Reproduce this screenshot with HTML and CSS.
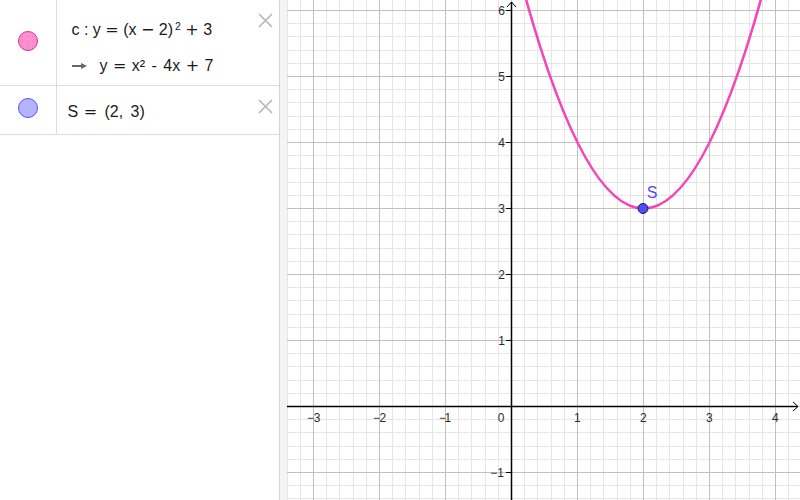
FILE: index.html
```html
<!DOCTYPE html>
<html lang="en">
<head>
<meta charset="utf-8">
<title>GeoGebra – Parabola</title>
<link rel="stylesheet" href="styles.css">
</head>
<body>
<div class="app">
  <div class="algebra">
    <div class="item item-c">
      <div class="marble-col"><span class="marble marble-pink marble-c"></span></div>
      <div class="content content-c">
        <div class="line line-def">c : y <span class="op">=</span> (x <span class="op">−</span> 2)<span class="sup">2</span> <span class="op">+</span> 3</div>
        <div class="line line-out"><svg class="out-arrow" width="15" height="10" viewBox="0 0 15 10"><path d="M0 5H10" stroke="#666" stroke-width="2"/><path d="M9 2L15 5L9 8Z" fill="#666"/></svg>y <span class="op">=</span> x² <span class="hy">-</span> 4x <span class="op">+</span> 7</div>
      </div>
      <div class="close"><svg width="15" height="15" viewBox="0 0 15 15"><path d="M1 1L14 14M14 1L1 14" stroke="#b3b3b3" stroke-width="1.5"/></svg></div>
    </div>
    <div class="item item-s">
      <div class="marble-col"><span class="marble marble-blue marble-s"></span></div>
      <div class="content content-s">
        <div class="line">S <span class="op">=</span> <span class="paren">(</span>2<span class="comma">,</span> 3)</div>
      </div>
      <div class="close"><svg width="15" height="15" viewBox="0 0 15 15"><path d="M1 1L14 14M14 1L1 14" stroke="#b3b3b3" stroke-width="1.5"/></svg></div>
    </div>
  </div>
  <div class="splitter"></div>
  <div class="graphics">
    <svg viewBox="287 0 513 500" width="513" height="500">
      <defs>
        <pattern id="grid" x="511" y="406" width="66" height="66" patternUnits="userSpaceOnUse">
          <rect width="66" height="66" fill="#fff"/>
          <path d="M13.7 0V66M26.9 0V66M40.1 0V66M53.3 0V66M0 13.7H66M0 26.9H66M0 40.1H66M0 53.3H66" stroke="#e6e6e6" stroke-width="1" shape-rendering="crispEdges"/>
          <path d="M0.5 0V66M0 0.5H66" stroke="#c0c0c0" stroke-width="1" shape-rendering="crispEdges"/>
        </pattern>
      </defs>
      <rect x="287" y="0" width="513" height="500" fill="url(#grid)"/>
      <g class="axes" stroke="#000" fill="none">
        <path d="M287 406.5H797.5M511.5 500V2" stroke-width="1.5"/>
        <path d="M793 402L798 406.5L793 411M507 7L511.5 2L516 7" stroke-width="1"/>
        <path d="M506 10.5H511.5M506 76.5H511.5M506 142.5H511.5M506 208.5H511.5M506 274.5H511.5M506 340.5H511.5M506 472.5H511.5" stroke-width="1"/>
      </g>
      <g class="labels">
        <text x="314" y="422" text-anchor="end">−</text><text x="313.8" y="422">3</text>
        <text x="380" y="422" text-anchor="end">−</text><text x="379.6" y="422">2</text>
        <text x="446" y="422" text-anchor="end">−</text><text x="444.6" y="422">1</text>
        <text x="504.5" y="422" text-anchor="end">0</text>
        <text x="577.3" y="422" text-anchor="middle">1</text>
        <text x="643.3" y="422" text-anchor="middle">2</text>
        <text x="709.3" y="422" text-anchor="middle">3</text>
        <text x="775.3" y="422" text-anchor="middle">4</text>
        <text x="505" y="15" text-anchor="end">6</text>
        <text x="505" y="81" text-anchor="end">5</text>
        <text x="505" y="147" text-anchor="end">4</text>
        <text x="505" y="213" text-anchor="end">3</text>
        <text x="505" y="279" text-anchor="end">2</text>
        <text x="505" y="345" text-anchor="end">1</text>
        <text x="504" y="477" text-anchor="end">−1</text>
      </g>
      <path class="curve" d="M511.5 -55.5Q643.5 472.5 775.5 -55.5" fill="none" stroke="#f446b7" stroke-width="2.6"/>
      <circle cx="643" cy="208.5" r="5" fill="#4d4dff" stroke="#1a1a4d" stroke-width="1"/>
      <text class="point-label" x="646.8" y="197.5">S</text>
    </svg>
  </div>
</div>
</body>
</html>
```

FILE: styles.css
```css
html, body {
  margin: 0;
  padding: 0;
  width: 800px;
  height: 500px;
  overflow: hidden;
  background: #fff;
}

body {
  font-family: "Liberation Sans", Arial, sans-serif;
  color: #1a1a1a;
}

.app {
  display: flex;
  width: 800px;
  height: 500px;
}

.algebra {
  width: 280px;
  flex: none;
  box-sizing: border-box;
  border-right: 1px solid #d6d6d6;
  background: #fff;
}

.splitter {
  width: 7px;
  flex: none;
  background: #f4f4f4;
}

.graphics {
  width: 513px;
  height: 500px;
  flex: none;
}

.graphics svg {
  display: block;
}

.item {
  display: flex;
  box-sizing: border-box;
  border-bottom: 1px solid #dcdcdc;
}

.item-c {
  height: 86px;
}

.item-s {
  height: 49px;
}

.marble-col {
  width: 57px;
  flex: none;
  box-sizing: border-box;
  border-right: 1px solid #dcdcdc;
  display: flex;
  justify-content: center;
  align-items: flex-start;
}

.marble {
  display: block;
  width: 20px;
  height: 20px;
  box-sizing: border-box;
  border-radius: 50%;
}

.marble-c {
  margin-top: 31px;
}

.marble-s {
  margin-top: 12px;
}

.marble-pink {
  border: 1px solid #d6318f;
  background:
    radial-gradient(circle, #f070b8 0.5px, transparent 0.9px) 1px 2px / 5px 5px,
    #ff8fcf;
}

.marble-blue {
  border: 1px solid #5252ff;
  background: #b3b3ff;
}

.content {
  flex: 1;
  min-width: 0;
}

.content-c {
  padding-left: 14.5px;
  padding-top: 19.5px;
}

.content-s {
  padding-left: 10.5px;
  padding-top: 16px;
}

.line {
  font-size: 16px;
  line-height: 20px;
  height: 20px;
  white-space: nowrap;
}

.line-out {
  margin-top: 16px;
}

.out-arrow {
  display: inline-block;
  vertical-align: 0;
  margin-right: 13px;
}

.op {
  font-family: "DejaVu Sans", sans-serif;
  margin: 0 1px;
}

.line-def .op {
  margin: 0;
}

.hy {
  margin: 0 2px;
}

.sup {
  font-size: 10.5px;
  line-height: 0;
  vertical-align: 5px;
  margin-left: 2px;
}

.paren {
  margin-left: 2px;
}

.comma {
  margin-right: 3px;
}

.close {
  width: 15px;
  height: 15px;
  flex: none;
  margin: 13px 6px 0 0;
}

.close svg {
  display: block;
}

.labels text {
  font-family: "Liberation Sans", Arial, sans-serif;
  font-size: 12px;
  fill: #2b2b2b;
}

.point-label {
  font-family: "Liberation Sans", Arial, sans-serif;
  font-size: 16px;
  fill: #4d4dff;
}
```
